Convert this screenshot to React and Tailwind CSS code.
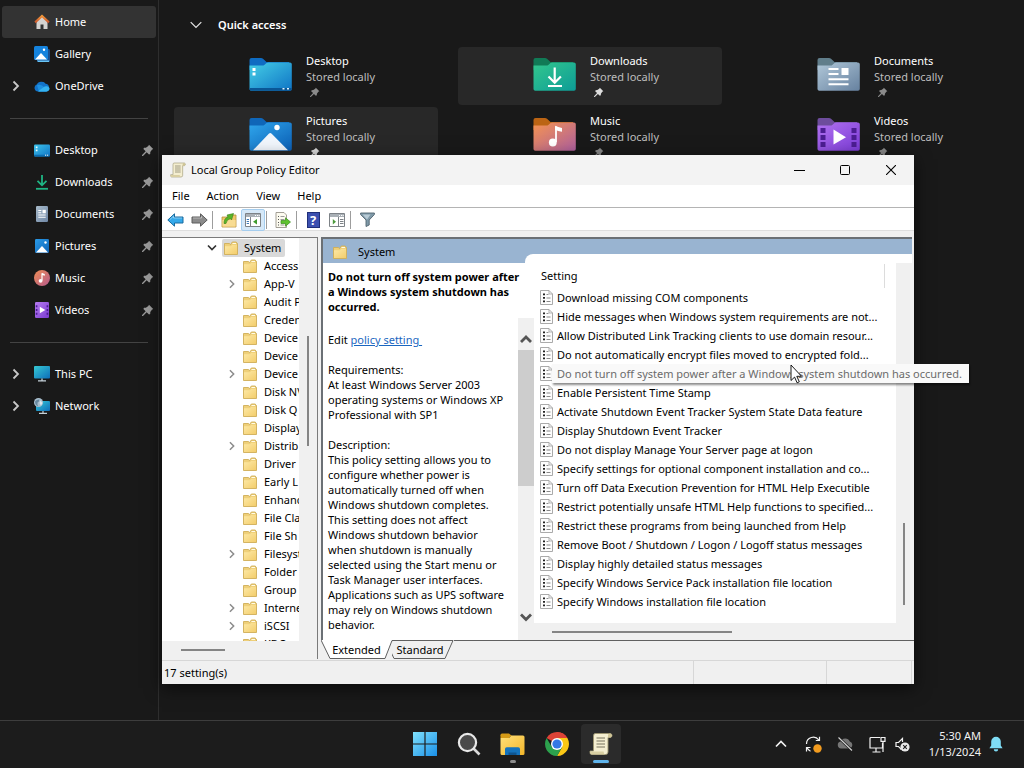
import React from "react";

const Svg = ({ w, h, box, children, className = "" }) => (
  <svg width={w} height={h} viewBox={box || `0 0 ${w} ${h}`} fill="none" aria-hidden="true" className={`block shrink-0 ${className}`}>
    {children}
  </svg>
);

const Grad = ({ id, from, to, x2 = 1, y2 = 1 }) => (
  <linearGradient id={id} x1="0" y1="0" x2={x2} y2={y2}>
    <stop offset="0" stopColor={from} />
    <stop offset="1" stopColor={to} />
  </linearGradient>
);

const Chevron = ({ className = "" }) => (
  <Svg w={8} h={12} className={className}>
    <path d="M1.5 1.5 6 6 1.5 10.5" stroke="currentColor" strokeWidth="1.8" />
  </Svg>
);

const Pin = ({ className = "" }) => (
  <Svg w={12} h={12} className={className}>
    <path d="M7 .8 11.2 5 9.9 5.7 8.3 8.1 8.2 10 7 10.6 4.7 8.3 1 12 0 11.9 .1 11 3.7 7.3 1.4 5 2 3.8 3.9 3.7 6.3 2.1Z" fill="currentColor" />
  </Svg>
);

/* ---------- navigation icons ---------- */

const HomeIcon = () => (
  <Svg w={16} h={16}>
    <path d="M2.5 7 8 2l5.500 5v8h-4v-4.500h-3V15h-4Z" fill="#d5d3d1" />
    <path d="M8 .6 15.600 7.600 14.200 9.200 8 3.600 1.800 9.200.4 7.600Z" fill="url(#roof)" />
    <defs><Grad id="roof" from="#f8a13c" to="#c8502b" x2={0} /></defs>
  </Svg>
);
const GalleryIcon = () => (
  <Svg w={16} h={16}>
    <rect x="3" y="3" width="13" height="13" rx="1.500" fill="#1a4f8f" />
    <path d="M3 14.500h12v1.500H4Z" fill="#69c5f5" />
    <rect width="14" height="14" rx="1.500" fill="#1583dd" />
    <path d="M1 13.500 7 7l6 6.500Z" fill="#fff" />
    <circle cx="10" cy="3.800" r="1.200" fill="#fff" />
  </Svg>
);
const OneDriveIcon = () => (
  <Svg w={16} h={11}>
    <path d="M4 10.500A3.600 3.600 0 0 1 2.700 3.600 5.200 5.200 0 0 1 11.600 2.800 4 4 0 0 1 12.500 10.500Z" fill="#1273c9" />
    <path d="M5 10.500 3 4.200A5 5 0 0 1 8 4.600l6 4.500-1.500 1.400Z" fill="#1e90e0" />
    <path d="M3.800 10.500 9.500 6.300A4 4 0 0 1 15.600 7.200 3.400 3.400 0 0 1 12.500 10.500Z" fill="#35b3f0" />
  </Svg>
);
const DesktopIcon = () => (
  <Svg w={16} h={13}>
    <rect y="0.500" width="16" height="12" rx="1.200" fill="url(#desk)" />
    <path d="M1.800 2.500h1.700v1.700H1.800ZM1.800 5.500h1.700v1.700H1.800Z" fill="#e8fbff" />
    <path d="M0 10.800h16v.8a1 1 0 0 1-1 .9H1a1 1 0 0 1-1-.9Z" fill="#0b6cb0" />
    <path d="M11 11.200h1.200M13 11.200h1.200" stroke="#fff" />
    <defs><Grad id="desk" from="#3cc4ec" to="#1173c4" /></defs>
  </Svg>
);
const DownloadsIcon = () => (
  <Svg w={14} h={16}>
    <path d="M7 1v10M2.500 6.800 7 11.300l4.500-4.500" stroke="#1fb584" strokeWidth="1.800" />
    <path d="M1 14.800h12" stroke="#1fb584" strokeWidth="1.800" />
  </Svg>
);
const DocumentsIcon = () => (
  <Svg w={12} h={16}>
    <rect width="12" height="16" rx="1.200" fill="url(#doc)" />
    <path d="M2.300 4.500h3M2.300 6.800h3M2.300 9h7.400M2.300 11.200h7.400" stroke="#fff" strokeWidth="1.100" />
    <path d="M6.500 3.800h3.300v3.500H6.500Z" fill="#fff" />
    <defs><Grad id="doc" from="#a9bccb" to="#6f87a6" /></defs>
  </Svg>
);
const PicturesIcon = () => (
  <Svg w={14} h={14}>
    <rect width="14" height="14" rx="1.200" fill="url(#pic)" />
    <path d="M1 13.500 7 7l6 6.500Z" fill="#fff" />
    <circle cx="10.500" cy="3.500" r="1.200" fill="#fff" />
    <defs><Grad id="pic" from="#2a9be8" to="#0f63b5" /></defs>
  </Svg>
);
const MusicIcon = () => (
  <Svg w={16} h={16}>
    <circle cx="8" cy="8" r="8" fill="url(#mus)" />
    <path d="M8 3.200v7.300" stroke="#fff" strokeWidth="1.200" />
    <path d="M8 3l2.800 1v1.800L8 5Z" fill="#fff" />
    <circle cx="6.600" cy="10.800" r="1.900" fill="#fff" />
    <defs><Grad id="mus" from="#ef8d55" to="#b45a8c" /></defs>
  </Svg>
);
const VideosIcon = () => (
  <Svg w={14} h={16}>
    <rect width="14" height="16" rx="1.200" fill="url(#vid)" />
    <path d="M.8 3.200h1.600v2H.8Zm0 3.800h1.600v2H.8Zm0 3.800h1.600v2H.8ZM11.600 3.200h1.600v2h-1.600Zm0 3.800h1.600v2h-1.600Zm0 3.800h1.600v2h-1.600Z" fill="#4b1a94" />
    <path d="M4.800 4.800 10.300 8l-5.500 3.200Z" fill="#fff" />
    <defs><Grad id="vid" from="#b67bf0" to="#7a3bd0" /></defs>
  </Svg>
);
const PcIcon = () => (
  <Svg w={16} h={16}>
    <rect width="16" height="12.500" rx="1" fill="url(#pc)" />
    <path d="M8 12.500v2M4 14.900h8" stroke="#c5d2da" strokeWidth="1.300" />
    <defs><Grad id="pc" from="#36c9d3" to="#0d6dba" /></defs>
  </Svg>
);
const NetworkIcon = () => (
  <Svg w={16} h={16}>
    <rect x="2" y="3" width="14" height="10" rx="1" fill="url(#net)" />
    <path d="M9 13v2M5 15.300h8" stroke="#c5d2da" strokeWidth="1.200" />
    <circle cx="4.500" cy="4.500" r="4.500" fill="#a9bfce" />
    <path d="M1 3.500Q3 1 5.500 1.500 5 4 3.500 4.500 3 7 4.500 8.500 1 7.500 1 3.500Z" fill="#67879d" />
    <path d="M6.500 2.500 8.500 5 7 7.500 5.500 5Z" fill="#dfe8ee" />
    <defs><Grad id="net" from="#38c9d6" to="#0d6dba" /></defs>
  </Svg>
);

/* ---------- quick access folders ---------- */

const BigFolder = ({ id, tab, from, to, children }) => (
  <Svg w={43} h={34}>
    <path d="M.5 3A2 2 0 0 1 2.500 1H12a3 3 0 0 1 2 .8L17.500 5H40v8H.5Z" fill={tab} />
    <path d="M.5 8.500H13.500a3 3 0 0 0 1.800-.6L17.500 6a3 3 0 0 1 1.800-.6H41a1.800 1.800 0 0 1 1.800 1.800V32a1.800 1.800 0 0 1-1.800 1.800H2.300A1.800 1.800 0 0 1 .5 32Z" fill={`url(#${id})`} />
    {children}
    <defs><Grad id={id} from={from} to={to} /></defs>
  </Svg>
);

const folders = [
  {
    name: "Desktop",
    art: (
      <BigFolder id="f1" tab="#0f6cc2" from="#45cfe6" to="#0f74c5">
        <path d="M3.500 11h3v3h-3ZM3.500 15.500h3v3h-3Z" fill="#fff" />
        <path d="M.5 31H42.800v1a1.800 1.800 0 0 1-1.800 1.800H2.300A1.800 1.800 0 0 1 .5 32Z" fill="#0a5796" />
        <path d="M33.500 31h2v1.600h-2ZM38 31h2v1.600h-2Z" fill="#dff3ff" />
      </BigFolder>
    ),
  },
  {
    name: "Downloads",
    hot: true,
    art: (
      <BigFolder id="f2" tab="#117a56" from="#33c78d" to="#0d9c97">
        <path d="M21.700 10.500V25M15.500 19.500l6.200 6.200 6.200-6.200M15 29h14" stroke="#fff" strokeWidth="2.200" />
      </BigFolder>
    ),
  },
  {
    name: "Documents",
    art: (
      <BigFolder id="f3" tab="#617e8b" from="#b1c8d9" to="#66819f">
        <path d="M11.500 12h10M11.500 17h10M11.500 22.300h20M11.500 27.300h20" stroke="#fff" strokeWidth="2" />
        <path d="M24.500 11h7v7h-7Z" fill="#fff" />
      </BigFolder>
    ),
  },
  {
    name: "Pictures",
    hot: true,
    art: (
      <BigFolder id="f4" tab="#0f66b8" from="#2fa6ec" to="#0c5fb5">
        <path d="M4 33.200 19.800 16.800a2 2 0 0 1 2.900 0L39 33.200Z" fill="#f1f6fc" />
        <circle cx="28" cy="10.500" r="2.700" fill="#fff" />
      </BigFolder>
    ),
  },
  {
    name: "Music",
    art: (
      <BigFolder id="f5" tab="#bb6414" from="#f59450" to="#ae5f9e">
        <path d="M23 9.500V25" stroke="#fff" strokeWidth="1.800" />
        <path d="M22.100 8.800q3 1.500 6.900 2.200v3.800q-4-.3-6.900-2Z" fill="#fff" />
        <circle cx="19.800" cy="25.500" r="3.900" fill="#fff" />
      </BigFolder>
    ),
  },
  {
    name: "Videos",
    art: (
      <BigFolder id="f6" tab="#6d4c9c" from="#b172f0" to="#7b3bd6">
        <path d="M3.500 11h5v5h-5Zm0 7h5v5h-5Zm0 7h5v5h-5ZM34.500 11h5v5h-5Zm0 7h5v5h-5Zm0 7h5v5h-5Z" fill="#4c1d92" />
        <path d="M16.500 12.500 29 20.200 16.500 27.500Z" fill="#fff" />
      </BigFolder>
    ),
  },
];

/* ---------- editor icons ---------- */

const Folder = () => (
  <Svg w={14} h={14}>
    <path d="M.5 2.500h5l1 1.200L8.300 1h4l.7 1.500h.5v11H.5Z" fill="#efd07a" stroke="#cfae58" strokeWidth=".9" />
    <path d="M1 5.200h5.800L8.200 4H13v9H1Z" fill="url(#tf)" />
    <path d="M8.800 2h3.200v1H8.200Z" fill="#fffbe6" />
    <defs><Grad id="tf" from="#fde9a6" to="#f3cd6c" /></defs>
  </Svg>
);
const PolicyIcon = () => (
  <Svg w={13} h={15}>
    <path d="M.5.5h8.500l3.500 3.500v10.500H.5Z" fill="#fdfdfd" stroke="#a0a0a0" strokeWidth=".9" />
    <path d="M9 .5V4H12.500" stroke="#a8a8a8" strokeWidth=".9" />
    <path d="M3 3.500h2v1.800H3ZM3 7h2v1.800H3ZM3 10.500h2v1.800H3Z" fill="#222" />
    <path d="M6.500 4.500h2M6.500 8h4M6.500 11.500h4" stroke="#8a8a8a" />
  </Svg>
);
const ScrollIcon = ({ size = 16 }) => (
  <Svg w={size} h={size} box="0 0 24 24">
    <path d="M6 1.500h15.500q1.500.5 1.500 2t-1.500 2H19V20q0 2.500-2.500 2.500h-14Q1 22.500 1 20.500V19h3.500V4Q4.500 1.500 6 1.500Z" fill="#f4eed0" stroke="#9b946f" strokeWidth=".9" />
    <path d="M19 5.500V3q.2-1.500 2-1.500 1.800.3 1.800 2T21.500 5.500Z" fill="#cfc596" />
    <path d="M1 19.500h13.500q.3 2.800 2 3H3Q1 22.500 1 19.500Z" fill="#d9cfa2" />
    <path d="M7.500 6h8.500M7.500 9h8.500M7.500 12h8.500M7.500 15h8.500" stroke="#77735f" strokeWidth="1" />
  </Svg>
);

const Arrow = ({ back }) => (
  <Svg w={17} h={14}>
    {back ? (
      <path d="M.8 7 7.500.8V4h8.500v6H7.500v3.200Z" fill="#35a9ea" stroke="#1b6b9e" />
    ) : (
      <path d="M16.200 7 9.500.8V4H1v6h8.500v3.200Z" fill="#8b8b8b" stroke="#5c5c5c" />
    )}
    <path d={back ? "M3 6.500 6.500 3.200V5H15" : "M2 5h8.500V3.200"} stroke="#fff" strokeOpacity=".4" />
  </Svg>
);
const FolderUpIcon = () => (
  <Svg w={16} h={16}>
    <path d="M1 5h6l1.500-2H15v12H1Z" fill="#efc76a" stroke="#b78f3c" strokeWidth=".8" />
    <path d="M1.400 8h13.200v6.600H1.400Z" fill="#f8dc93" />
    <path d="M3 11.500Q3 6 7 5L6 3l6.500-1.500L10.500 8 9.500 6.500Q5.500 7.500 5 11.500Z" fill="#58b428" stroke="#38801a" strokeWidth=".6" />
  </Svg>
);
const PaneIcon = ({ right }) => (
  <Svg w={16} h={14}>
    <path d="M.5.5h15v13H.5Z" fill="#fff" stroke="#7d8287" />
    <path d="M1 1h14v3H1Z" fill="#a9b0b6" />
    <path d="M10 2.500h1M12 2.500h1M13.700 2.500h1" stroke="#fff" />
    {right ? (
      <>
        <path d="M9.500 4v9.500" stroke="#7d8287" />
        <path d="M11 6.500h3.500M11 8.500h3.500M11 10.500h3.500" stroke="#7d8287" />
        <path d="M3.800 6v5.500L7 8.800Z" fill="#4c9a3c" />
      </>
    ) : (
      <>
        <path d="M5.500 4v9.500" stroke="#7d8287" />
        <path d="M1.700 6.500H4M1.700 8.500H4M1.700 10.500H4" stroke="#3f7bb8" />
        <path d="M12 6v5.500L8 8.800Z" fill="#3f9b2e" />
      </>
    )}
  </Svg>
);
const ExportIcon = () => (
  <Svg w={16} h={16}>
    <path d="M1 .5h8L11.500 3v12.500H1Z" fill="#fdfbf0" stroke="#98948a" strokeWidth=".9" />
    <path d="M3 4.500h1M3 7.500h1M3 10.500h1M3 13h1" stroke="#555" />
    <path d="M5.500 4.500h4M5.500 7.500h4M5.500 13h4" stroke="#9b9b9b" />
    <path d="M6 8.500h4.500V5.800l5 4.200-5 4.200v-2.700H6Z" fill="#5fc22e" stroke="#3b8a1c" strokeWidth=".7" />
  </Svg>
);
const HelpIcon = () => (
  <span className="flex h-4 w-[13px] items-center justify-center border border-[#1f2f7a] bg-[#3c50b0] text-[13px] leading-4 font-bold text-white">?</span>
);
const FilterIcon = () => (
  <Svg w={15} h={15}>
    <path d="M.6 1h13.800v1.500L9.200 8v5L6 14.500V8L.6 2.500Z" fill="#7f99a8" stroke="#51646f" strokeWidth=".9" />
    <path d="M2.500 2.500h8L7 7.500Z" fill="#b8cbd6" />
  </Svg>
);

/* ---------- data ---------- */

const navTop = [
  { name: "Home", icon: <HomeIcon />, active: true },
  { name: "Gallery", icon: <GalleryIcon /> },
  { name: "OneDrive", icon: <OneDriveIcon />, expand: true },
];
const navPinned = [
  { name: "Desktop", icon: <DesktopIcon />, pin: true },
  { name: "Downloads", icon: <DownloadsIcon />, pin: true },
  { name: "Documents", icon: <DocumentsIcon />, pin: true },
  { name: "Pictures", icon: <PicturesIcon />, pin: true },
  { name: "Music", icon: <MusicIcon />, pin: true },
  { name: "Videos", icon: <VideosIcon />, pin: true },
];
const navDevices = [
  { name: "This PC", icon: <PcIcon />, expand: true },
  { name: "Network", icon: <NetworkIcon />, expand: true },
];

const tree = [
  ["Access"], ["App-V", true], ["Audit P"], ["Creden"], ["Device"], ["Device"], ["Device", true],
  ["Disk NV"], ["Disk Q"], ["Display"], ["Distrib", true], ["Driver"], ["Early L"], ["Enhanc"],
  ["File Cla"], ["File Sh"], ["Filesyst", true], ["Folder"], ["Group"], ["Interne", true],
  ["iSCSI", true], ["KDC"],
];

const settings = [
  "Download missing COM components",
  "Hide messages when Windows system requirements are not...",
  "Allow Distributed Link Tracking clients to use domain resour...",
  "Do not automatically encrypt files moved to encrypted fold...",
  "",
  "Enable Persistent Time Stamp",
  "Activate Shutdown Event Tracker System State Data feature",
  "Display Shutdown Event Tracker",
  "Do not display Manage Your Server page at logon",
  "Specify settings for optional component installation and co...",
  "Turn off Data Execution Prevention for HTML Help Executible",
  "Restrict potentially unsafe HTML Help functions to specified...",
  "Restrict these programs from being launched from Help",
  "Remove Boot / Shutdown / Logon / Logoff status messages",
  "Display highly detailed status messages",
  "Specify Windows Service Pack installation file location",
  "Specify Windows installation file location",
];

const Lines = ({ items }) => items.map((t) => <span key={t} className="block">{t}</span>);

/* ---------- explorer ---------- */

function NavGroup({ items }) {
  return (
    <ul>
      {items.map((n) => (
        <li key={n.name}>
          <button type="button" className={`flex h-8 w-full items-center rounded-[3px] ${n.active ? "bg-[#333333]" : ""}`}>
            <span className="flex w-7 justify-center text-[#c8c8c8]">{n.expand && <Chevron />}</span>
            <span className="ml-1 flex w-4 justify-center">{n.icon}</span>
            <span className="ml-[5px] flex-1 text-left">{n.name}</span>
            {n.pin && <Pin className="mr-[2px] text-[#9a9a9a]" />}
          </button>
        </li>
      ))}
    </ul>
  );
}

function NavDivider() {
  return (
    <div className="flex h-8 items-center px-2">
      <hr className="w-full border-[#434343]" />
    </div>
  );
}

function Explorer() {
  return (
    <div className="flex flex-1">
      <nav aria-label="Folders" className="w-[159px] shrink-0 border-r border-[#2e2e2e] pt-[6px] pr-[2px] pl-[2px]">
        <NavGroup items={navTop} />
        <NavDivider />
        <NavGroup items={navPinned} />
        <NavDivider />
        <NavGroup items={navDevices} />
      </nav>
      <main className="flex-1 pr-[18px] pl-[15px]">
        <button type="button" className="mt-[9px] ml-4 flex h-8 items-center gap-4 font-semibold">
          <Svg w={12} h={8}>
            <path d="M.7 1.200 6 6.500l5.300-5.300" stroke="#e6e6e6" strokeWidth="1.200" />
          </Svg>
          Quick access
        </button>
        <ul className="mt-[6px] grid grid-cols-3 gap-x-5 gap-y-[2px]">
          {folders.map((f) => (
            <li key={f.name} className={`flex h-[58px] rounded-[4px] pl-[75px] ${f.hot ? "bg-[#282828]" : ""}`}>
              <span className="pt-[10px]">{f.art}</span>
              <span className="ml-[14px] pt-[6px] leading-4">
                <span className="block">{f.name}</span>
                <span className="block text-[#bdbdbd]">Stored locally</span>
                <Pin className={`mt-[2px] ml-1 h-[10px] w-[10px] ${f.hot ? "text-[#dddddd]" : "text-[#8b8b8b]"}`} />
              </span>
            </li>
          ))}
        </ul>
      </main>
    </div>
  );
}

/* ---------- group policy editor ---------- */

const Tool = ({ label, active, children }) => (
  <button type="button" aria-label={label} className={`flex h-[22px] w-6 items-center justify-center rounded-[2px] border ${active ? "border-[#a5cdee] bg-[#d5e8f8]" : "border-transparent"}`}>
    {children}
  </button>
);
const Sep = () => <span className="mr-1 ml-px h-[18px] w-px bg-[#9d9d9d]" />;

function TreePane() {
  return (
    <aside className="flex w-[156px] shrink-0 flex-col border-t border-r border-[#7a7a7a] bg-[#f0f0f0]">
      <div className="flex h-[403px]">
        <ul className="w-[137px] overflow-hidden bg-white pt-px">
          <li className="flex h-[18px] items-center pl-[45px]">
            <Svg w={10} h={8}>
              <path d="M1 1.500 5 5.500l4-4" stroke="#333" strokeWidth="1.700" />
            </Svg>
            <button type="button" className="ml-[5px] flex h-[18px] items-center gap-[6px] rounded-[2px] bg-[#d9d9d9] pr-1 pl-[2px]">
              <Folder />
              System
            </button>
          </li>
          {tree.map(([name, expand], i) => (
            <li key={i} className="flex h-[18px] items-center pl-[64px] whitespace-nowrap">
              <span className="flex w-[17px] shrink-0 items-center pl-[2px] text-[#8c8c8c]">{expand && <Chevron className="h-[10px]" />}</span>
              <Folder />
              <span className="ml-[7px]">{name}</span>
            </li>
          ))}
        </ul>
        <div className="flex flex-1 justify-center pt-[98px]">
          <span className="h-[110px] w-[2px] bg-[#858585]" />
        </div>
      </div>
      <div className="flex flex-1 items-center pl-[19px]">
        <span className="h-[2px] w-11 bg-[#858585]" />
      </div>
    </aside>
  );
}

function Detail() {
  return (
    <article className="w-[195px] shrink-0 bg-white pt-[6px] pl-[5px] leading-[15px] whitespace-nowrap">
      <h2 className="relative z-10 font-bold">
        <Lines items={["Do not turn off system power after", "a Windows system shutdown has", "occurred."]} />
      </h2>
      <p className="mt-[18px]">
        Edit <a href="#policy" className="text-[#1a66c0] underline">policy setting&nbsp;</a>
      </p>
      <p className="mt-[15px]">
        <Lines items={["Requirements:", "At least Windows Server 2003", "operating systems or Windows XP", "Professional with SP1"]} />
      </p>
      <p className="mt-[15px]">
        <Lines
          items={[
            "Description:", "This policy setting allows you to", "configure whether power is", "automatically turned off when",
            "Windows shutdown completes.", "This setting does not affect", "Windows shutdown behavior", "when shutdown is manually",
            "selected using the Start menu or", "Task Manager user interfaces.", "Applications such as UPS software",
            "may rely on Windows shutdown", "behavior.",
          ]}
        />
      </p>
    </article>
  );
}

function SettingsTable() {
  return (
    <div className="min-w-0 flex-1 bg-white pb-3">
      <table className="w-full table-fixed border-collapse">
        <thead>
          <tr>
            <th scope="col" className="h-[25px] p-0 pr-[11px] pl-[7px] text-left font-normal">
              <span className="flex h-6 items-center border-r border-[#dcdcdc]">Setting</span>
            </th>
          </tr>
        </thead>
        <tbody>
          {settings.map((s, i) => (
            <tr key={i}>
              <td className="h-[19px] p-0 pl-[6px]">
                <span className="relative flex h-[19px] items-center gap-1 whitespace-nowrap">
                  <PolicyIcon />
                  {s || (
                    <span role="tooltip" className="absolute top-0 left-3 z-20 flex h-[19px] items-center bg-[#f9f9f9] pr-[7px] pl-[5px] text-[#6b6b6b] shadow-[1px_2px_2px_rgba(0,0,0,0.45)]">
                      Do not turn off system power after a Windows system shutdown has occurred.
                      <Svg w={12} h={20} className="absolute top-0 left-[238px]">
                        <path d="M1 1v15.500l3.600-3.400 2.500 5.700 2.200-1-2.500-5.500h4.700Z" fill="#fff" stroke="#000" strokeWidth=".9" />
                      </Svg>
                    </span>
                  )}
                </span>
              </td>
            </tr>
          ))}
        </tbody>
      </table>
    </div>
  );
}

function Tabs() {
  return (
    <div role="tablist" className="flex h-[19px]">
      <button type="button" role="tab" aria-selected="true" className="relative h-[19px] w-[71px] pt-px text-center">
        <Svg w={72} h={19} className="absolute inset-0">
          <path d="M0 0 9 18.500H64L71 0Z" fill="#fff" />
          <path d="M0 0 9 18.500H64L71 .5" stroke="#606060" />
        </Svg>
        <span className="relative">Extended</span>
      </button>
      <button type="button" role="tab" aria-selected="false" className="relative h-[19px] w-[62px] pt-px pr-[6px] text-center">
        <Svg w={62} h={19} className="absolute inset-0">
          <path d="M0 .5 -2.500 9 2 18.500H53L61 .5Z" fill="#f0f0f0" stroke="#606060" />
        </Svg>
        <span className="relative">Standard</span>
      </button>
      <span className="flex-1 border-t border-[#606060]" />
    </div>
  );
}

function PolicyEditor() {
  return (
    <section aria-label="Local Group Policy Editor" className="absolute top-[155px] right-[110px] left-[162px] bg-[#f0f0f0] text-black shadow-[0_4px_16px_rgba(0,0,0,0.6)]">
      <header className="flex h-[30px] items-center bg-[#f3f3f3] pl-2">
        <ScrollIcon />
        <h1 className="ml-[5px] flex-1">Local Group Policy Editor</h1>
        <button type="button" aria-label="Minimize" className="flex h-full w-[45px] items-center justify-center">
          <Svg w={11} h={10}><path d="M0 5.500h11" stroke="#000" /></Svg>
        </button>
        <button type="button" aria-label="Maximize" className="flex h-full w-[46px] items-center justify-center">
          <Svg w={10} h={10}><rect x=".5" y=".5" width="9" height="9" rx="1" stroke="#000" /></Svg>
        </button>
        <button type="button" aria-label="Close" className="flex h-full w-[46px] items-center justify-center">
          <Svg w={10} h={10}><path d="M0 0l10 10M10 0 0 10" stroke="#000" strokeWidth="1.100" /></Svg>
        </button>
      </header>

      <div role="menubar" className="flex h-[23px] items-center gap-[17px] border-b border-[#b4b4b4] bg-white pl-[10px]">
        {["File", "Action", "View", "Help"].map((m) => (
          <button key={m} type="button" role="menuitem">{m}</button>
        ))}
      </div>

      <div role="toolbar" aria-label="Standard" className="flex h-[23px] items-center border-b border-[#dedede] bg-white pt-px pl-px">
        <Tool label="Back"><Arrow back /></Tool>
        <Tool label="Forward"><Arrow /></Tool>
        <Sep />
        <Tool label="Up one level"><FolderUpIcon /></Tool>
        <Tool label="Show console tree" active><PaneIcon /></Tool>
        <Sep />
        <Tool label="Export list"><ExportIcon /></Tool>
        <Sep />
        <Tool label="Help"><HelpIcon /></Tool>
        <Tool label="Show action pane"><PaneIcon right /></Tool>
        <Sep />
        <Tool label="Filter"><FilterIcon /></Tool>
      </div>

      <div className="flex pt-[6px]">
        <TreePane />
        <div className="ml-[3px] flex min-w-0 flex-1 flex-col">
          <div className="mr-[2px] flex flex-1 flex-col border-t-2 border-l-2 border-[#6b7075]">
            <div className="relative flex h-6 items-center bg-[#99b4d1] pt-px pl-[10px]">
              <Folder />
              <span className="ml-[11px]">System</span>
              <span className="absolute right-0 bottom-0 left-[202px] h-[9px] rounded-tl-[8px] bg-white" />
            </div>
            <div className="flex flex-1">
              <Detail />
              <div className="flex w-4 shrink-0 bg-white pt-[55px]">
                <div className="flex flex-1 flex-col items-center bg-[#f0f0f0]">
                  <Svg w={12} h={32}>
                    <path d="M1 24 6 19l5 5" stroke="#555" strokeWidth="2.800" />
                  </Svg>
                  <span className="h-[136px] w-4 bg-[#cdcdcd]" />
                  <span className="flex-1" />
                  <Svg w={12} h={28}>
                    <path d="M1 2.500 6 7.500l5-5" stroke="#555" strokeWidth="2.800" />
                  </Svg>
                </div>
              </div>
              <div className="flex min-w-0 flex-1 flex-col bg-[#f0f0f0]">
                <div className="flex">
                  <SettingsTable />
                  <div className="flex w-4 shrink-0 items-end justify-center pb-[18px]">
                    <span className="h-[82px] w-[2px] bg-[#858585]" />
                  </div>
                </div>
                <div className="flex h-[17px] items-center pl-[18px]">
                  <span className="h-[2px] w-1/2 max-w-[181px] bg-[#858585]" />
                </div>
              </div>
            </div>
          </div>
          <Tabs />
        </div>
      </div>

      <footer className="mt-px flex h-[24px] items-center border-t border-[#d7d7d7]">
        <span className="flex-1 pl-[2px]">17 setting(s)</span>
        <span className="h-full w-[133px] border-l border-[#d7d7d7]" />
        <span className="h-full w-[86px] border-x border-[#d7d7d7]" />
        <span className="w-[2px]" />
      </footer>
    </section>
  );
}

/* ---------- taskbar ---------- */

const TaskButton = ({ label, active, mark, children }) => (
  <button type="button" aria-label={label} className={`relative flex h-10 w-10 items-center justify-center rounded-[4px] ${active ? "bg-[#2b2b2b]" : ""}`}>
    {children}
    {mark && <span className={`absolute bottom-px h-[3px] rounded-full ${active ? "w-4 bg-[#5fb4ec]" : "w-[6px] bg-[#8d8d8d]"}`} />}
  </button>
);

function Taskbar() {
  return (
    <footer className="grid h-12 shrink-0 grid-cols-[1fr_auto_1fr] items-center border-t border-[#3d3d3d] bg-[#1c1c1c] pb-px pl-px">
      <span />
      <div className="flex gap-1">
        <TaskButton label="Start">
          <Svg w={24} h={24}>
            <path d="M0 0h11.400v11.400H0ZM12.600 0H24v11.400H12.600ZM0 12.600h11.400V24H0ZM12.600 12.600H24V24H12.600Z" fill="url(#win)" />
            <defs><Grad id="win" from="#7fe0fb" to="#1a90e8" /></defs>
          </Svg>
        </TaskButton>
        <TaskButton label="Search">
          <Svg w={24} h={24}>
            <path d="m16.500 16.500 6 6" stroke="#d9d9d9" strokeWidth="2.600" />
            <circle cx="10.500" cy="10.500" r="8.600" fill="#4a4a4a" stroke="#e8e8e8" strokeWidth="2.200" />
          </Svg>
        </TaskButton>
        <TaskButton label="File Explorer" mark>
          <Svg w={25} h={24}>
            <path d="M.5 3A1.500 1.500 0 0 1 2 1.500h7L12 4H.5Z" fill="#d59a16" />
            <path d="M.5 3.500V6H9l2.500-2.500Z" fill="#d59a16" />
            <path d="M.5 6H9l2.500-2.500H23A1.500 1.500 0 0 1 24.500 5v16.500A1.500 1.500 0 0 1 23 23H2a1.500 1.500 0 0 1-1.500-1.500Z" fill="url(#exp)" />
            <path d="M5 23v-6a1.800 1.800 0 0 1 1.800-1.800h11.400A1.800 1.800 0 0 1 20 17v6Z" fill="#1473bd" />
            <path d="M8.500 20.500h8V23h-8Z" fill="#0e5590" />
            <defs><Grad id="exp" from="#ffe07a" to="#f3b62a" /></defs>
          </Svg>
        </TaskButton>
        <TaskButton label="Google Chrome">
          <Svg w={24} h={24}>
            <path d="M12 12 1.610 6A12 12 0 0 1 22.390 6Z" fill="#dd4337" />
            <path d="M12 0a12 12 0 0 1 10.390 6H12Z" fill="#dd4337" />
            <path d="M22.390 6A12 12 0 0 1 12 24l5.200-9L12 6Z" fill="#fbc816" />
            <path d="M1.610 6A12 12 0 0 0 12 24l5.200-9-10.400 0Z" fill="#2ca14d" />
            <circle cx="12" cy="12" r="6" fill="#fff" />
            <circle cx="12" cy="12" r="4.600" fill="#3478e5" />
          </Svg>
        </TaskButton>
        <TaskButton label="Local Group Policy Editor" active mark><ScrollIcon size={24} /></TaskButton>
      </div>
      <div className="flex items-center justify-end pr-[21px] text-[#f2f2f2]">
        <button type="button" aria-label="Show hidden icons" className="mr-[18px]">
          <Svg w={12} h={8}><path d="M1 6.500 6 1.500l5 5" stroke="currentColor" strokeWidth="1.700" /></Svg>
        </button>
        <button type="button" aria-label="Updates" className="mr-[15px]">
          <Svg w={17} h={17}>
            <path d="M1.500 8A6.800 6.800 0 0 1 13.800 4M14.500.8V4.500H10.800M5.500 15.200A6.800 6.800 0 0 1 2 11.500M1.500 15.500V11.500H5.500" stroke="currentColor" strokeWidth="1.200" />
            <circle cx="12.500" cy="12.500" r="4.200" fill="#f39c1f" />
          </Svg>
        </button>
        <button type="button" aria-label="OneDrive" className="mr-[15px]">
          <Svg w={17} h={14}>
            <path d="M4 11.500a3.500 3.500 0 0 1-.5-6.900 5 5 0 0 1 9.300 0 3.600 3.600 0 0 1 0 6.900Z" fill="#767676" />
            <path d="M1.500.5 15 13.500" stroke="#1c1c1c" strokeWidth="2.600" />
            <path d="M1.500.5 15 13.500" stroke="#d5d5d5" strokeWidth="1.100" />
          </Svg>
        </button>
        <button type="button" aria-label="Network" className="mr-[9px]">
          <Svg w={17} h={17}>
            <path d="M11 1.500H2a1 1 0 0 0-1 1V12h12.500V7M7 12v4M3.500 16h8" stroke="currentColor" strokeWidth="1.200" />
            <path d="M12 1.500h4v3.800h-4ZM14 5.300V16" stroke="currentColor" strokeWidth="1.200" />
          </Svg>
        </button>
        <button type="button" aria-label="Volume muted" className="mr-[15px]">
          <Svg w={15} h={15}>
            <path d="M6 13V12L3.500 9.500H1v-4h2.500L7.500 1.500V5" stroke="currentColor" strokeWidth="1.200" />
            <circle cx="10" cy="10" r="4.600" fill="#e8e8e8" />
            <path d="m8.200 8.200 3.600 3.600M11.800 8.200l-3.600 3.600" stroke="#1c1c1c" strokeWidth="1.100" />
          </Svg>
        </button>
        <time className="mr-2 w-14 text-right leading-4">
          <span className="block">5:30 AM</span>
          <span className="block">1/13/2024</span>
        </time>
        <button type="button" aria-label="Notifications">
          <Svg w={14} h={16}>
            <path d="M7 .8a4.800 4.800 0 0 1 4.800 4.800V9.500L13.600 12.200H.4L2.200 9.500V5.600A4.800 4.800 0 0 1 7 .8ZM4.800 13.200h4.400a2.200 2.200 0 0 1-4.400 0Z" fill="#7fdcf5" />
          </Svg>
        </button>
      </div>
    </footer>
  );
}

export default function App() {
  return (
    <div className="relative flex min-h-screen flex-col overflow-hidden bg-[#191919] font-['Noto_Sans',sans-serif] text-[11px] leading-4 text-white">
      <Explorer />
      <PolicyEditor />
      <Taskbar />
    </div>
  );
}
